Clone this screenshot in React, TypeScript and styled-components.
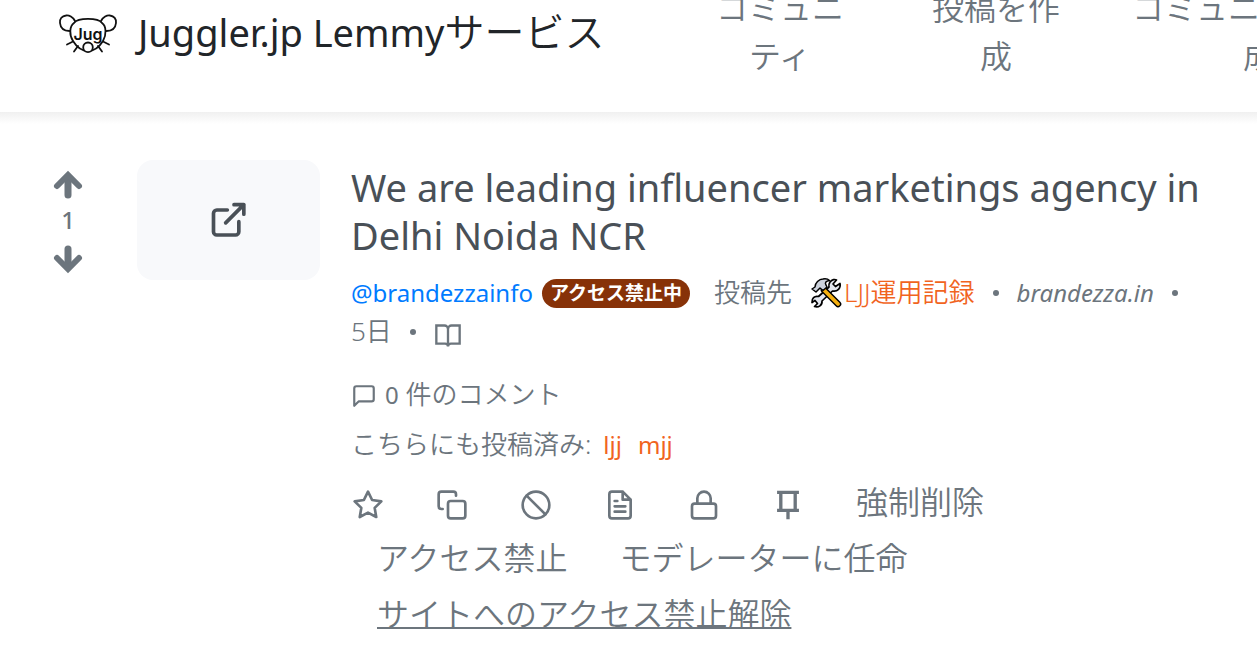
import React from "react";
import styled, { createGlobalStyle, css } from "styled-components";

const muted = "#6c757d";
const orange = "#f1641e";

const GlobalStyle = createGlobalStyle`
  *, *::before, *::after { box-sizing: border-box; }
  body {
    margin: 0;
    background: #fff;
    color: ${muted};
    font-family: "Noto Sans", "Noto Sans CJK JP", sans-serif;
    font-size: 32px;
    line-height: 48px;
    overflow: hidden;
  }
`;

const Header = styled.header`
  display: flex;
  align-items: flex-start;
  padding: 0 0 0 56px;
  height: 112px;
  overflow: hidden;
  white-space: nowrap;
  background: #fff;
`;

const HeaderShadow = styled.div`
  height: 12px;
  background: linear-gradient(#f0f0f0, #fff);
`;

const Brand = styled.a`
  display: flex;
  align-items: center;
  gap: 18px;
  width: 608px;
  flex: none;
  height: 64px;
  color: #212529;
  font-size: 38px;
  text-decoration: none;
`;

const Kana = styled.span`
  font-size: 40px;
  font-weight: 350;
`;

const Nav = styled.nav`
  display: flex;
  gap: 56px;
  margin-top: -16px;
  padding-left: 36px;
`;

const NavLink = styled.a`
  flex: none;
  min-width: 160px;
  color: ${muted};
  font-weight: 350;
  text-align: center;
  text-decoration: none;
`;

const Post = styled.article`
  display: flex;
  align-items: flex-start;
  padding: 36px 48px 24px;
`;

const Votes = styled.div`
  display: flex;
  flex: none;
  flex-direction: column;
  align-items: center;
  width: 40px;
  margin-right: 49px;
  padding-top: 9px;
  font-size: 24px;
  font-weight: 500;
  line-height: 38px;
`;

const Score = styled.span`
  padding-bottom: 4px;
`;

const IconButton = styled.button`
  display: flex;
  padding: 0;
  border: 0;
  background: none;
  color: inherit;
  cursor: pointer;
`;

const ReadButton = styled(IconButton)`
  padding-top: 8px;
`;

const Thumbnail = styled.a`
  display: flex;
  flex: none;
  align-items: center;
  justify-content: center;
  width: 183px;
  height: 120px;
  margin-right: 31px;
  border-radius: 16px;
  background: #f8f9fb;
  color: #495057;
`;

const Body = styled.div`
  flex: 1;
  min-width: 0;
`;

const Title = styled.h1`
  margin: 3px 0 14px;
  font-size: 38px;
  font-weight: 400;
  line-height: 48px;
`;

const TitleLink = styled.a`
  color: #495057;
  text-decoration: none;
`;

const Meta = styled.div`
  display: flex;
  flex-wrap: wrap;
  align-items: center;
  font-size: 26px;
  font-weight: 350;
  line-height: 39px;
`;

const latin = css`
  font-size: 24px;
  font-weight: 400;
`;

const UserLink = styled.a`
  ${latin}
  color: #007bff;
  text-decoration: none;
`;

const Badge = styled.span`
  height: 29px;
  margin: 2px 24px 0 9px;
  padding: 0 8px;
  border-radius: 15px;
  background: #873208;
  color: #fff;
  font-size: 19px;
  font-weight: 700;
  line-height: 28px;
`;

const CommunityLink = styled.a`
  display: flex;
  align-items: center;
  gap: 2px;
  margin-left: 18px;
  color: ${orange};
  text-decoration: none;
`;

const Dot = styled.span`
  width: 6px;
  height: 6px;
  margin: 0 18px;
  border-radius: 50%;
  background: ${muted};
`;

const DomainLink = styled.a`
  ${latin}
  color: ${muted};
  font-style: italic;
  text-decoration: none;
`;

const Comments = styled.a`
  display: flex;
  align-items: center;
  gap: 8px;
  margin-top: 24px;
  color: ${muted};
  font-size: 26px;
  font-weight: 350;
  line-height: 39px;
  text-decoration: none;
`;

const Count = styled.span`
  ${latin}
`;

const CommentIcon = styled.span`
  display: flex;
  padding-top: 3px;
`;

const CrossPosts = styled.div`
  display: flex;
  gap: 16px;
  margin-top: 11px;
  font-size: 26px;
  font-weight: 350;
  line-height: 39px;
`;

const CrossLabel = styled.span`
  margin-right: -4px;
`;

const CrossLink = styled.a`
  ${latin}
  color: ${orange};
  text-decoration: none;
`;

const Actions = styled.div`
  display: flex;
  flex-wrap: wrap;
  align-items: center;
  margin-top: 10px;
`;

const ActionButton = styled.button<{ $first?: boolean; $icon?: boolean; $underlined?: boolean }>`
  display: flex;
  align-items: center;
  height: 56px;
  padding: ${(p) => (p.$icon ? 6 : 0)}px 26px 0 ${(p) => (p.$first ? 1 : 26)}px;
  border: 0;
  background: none;
  color: ${muted};
  font-family: inherit;
  font-size: 32px;
  font-weight: 350;
  line-height: 48px;
  text-decoration: ${(p) => (p.$underlined ? "underline" : "none")};
  text-decoration-thickness: 2px;
  cursor: pointer;
`;

type IconProps = { size?: number; children: React.ReactNode };

const Icon = ({ size = 32, children }: IconProps) => (
  <svg
    width={size}
    height={size}
    viewBox="0 0 24 24"
    fill="none"
    stroke="currentColor"
    strokeWidth="2"
    strokeLinecap="round"
    strokeLinejoin="round"
    aria-hidden="true"
  >
    {children}
  </svg>
);

const Logo = () => (
  <svg width="64" height="48" viewBox="0 0 64 48" fill="none" stroke="#111" strokeWidth="1.8" strokeLinecap="round" aria-hidden="true">
    <path d="M19 13C17 9 13 7 10 7.500C6 8 3.500 11 4 15C4.500 20 8 23 13.500 23" />
    <path d="M45 13C47 9 51 7 54 7.500C58 8 60.500 11 60 15C59.500 20 56 23 50.500 23" />
    <path d="M18 15C22 9.500 42 9.500 46 15C50.500 18 50.500 27 47 33C43 39.500 37.500 43 32 43C26.500 43 21 39.500 17 33C13 27 13.500 18 18 15Z" />
    <circle cx="32" cy="39.300" r="4.800" fill="#fff" />
    <path d="M17 33.500L11 36.500M22 38L18 43.500M47 33.500L53 36.500M42 38L46 43.500" />
    <text x="32" y="32" textAnchor="middle" fill="#111" stroke="none" fontFamily="Inter, sans-serif" fontSize="16" fontWeight="600">Jug</text>
  </svg>
);

const Tools = () => (
  <svg width="32" height="32" viewBox="0 0 32 32" strokeLinejoin="round" strokeLinecap="round" aria-hidden="true">
    <path
      d="M20 5C22 2.500 25 2 26.500 3L23 7L25.500 9.500L30 6.500C31 11 27.500 15 22.500 14L12 24C12.500 28 8.500 31 4.500 29.500L7.500 26.500L5 23.500L2 25.500C1.500 21.500 4.500 18.500 8.500 19.500L19 10C18.500 8 19 6.500 20 5Z"
      fill="#e2e6ee"
      stroke="#000"
      strokeWidth="1.700"
    />
    <path d="M14 13L28 27" stroke="#000" strokeWidth="6.600" />
    <path d="M14 13L28 27" stroke="#f5b010" strokeWidth="3.800" />
    <path
      d="M2 12L5 10C5 6 9 2 13 2C16 1.500 18 2 19.500 3.500C16 4 14.500 5.500 16 8L17 10L13 13.500L10 11L6 15Z"
      fill="#ccd2dc"
      stroke="#000"
      strokeWidth="1.500"
    />
  </svg>
);

const ArrowUp = () => (
  <svg width="32" height="32" viewBox="0 0 32 32" fill="none" stroke="currentColor" strokeWidth="7" aria-hidden="true">
    <path d="M16 8V26" strokeLinecap="round" />
    <path d="M5 17L16 6L27 17" strokeWidth="6" strokeLinecap="round" />
  </svg>
);

const ArrowDown = () => (
  <svg width="32" height="32" viewBox="0 0 32 32" fill="none" stroke="currentColor" strokeWidth="7" aria-hidden="true">
    <path d="M16 6V24" strokeLinecap="round" />
    <path d="M5 15L16 26L27 15" strokeWidth="6" strokeLinecap="round" />
  </svg>
);

export default function App() {
  return (
    <>
      <GlobalStyle />
      <Header>
        <Brand href="#">
          <Logo />
          <span>Juggler.jp Lemmy<Kana>サービス</Kana></span>
        </Brand>
        <Nav>
          <NavLink href="#">コミュニ<br />ティ</NavLink>
          <NavLink href="#">投稿を作<br />成</NavLink>
          <NavLink href="#">コミュニティを作<br />成</NavLink>
        </Nav>
      </Header>
      <HeaderShadow />
      <Post>
        <Votes>
          <IconButton aria-label="Upvote"><ArrowUp /></IconButton>
          <Score>1</Score>
          <IconButton aria-label="Downvote"><ArrowDown /></IconButton>
        </Votes>
        <Thumbnail href="#" aria-label="brandezza.in">
          <Icon size={40}>
            <path d="M11 6H4.700a2 2 0 0 0-2 2v11a2 2 0 0 0 2 2h11.200a2 2 0 0 0 2-2v-6M15 2.800h5.900v5.700M20.900 2.800L10 13.700" strokeWidth="2.200" />
          </Icon>
        </Thumbnail>
        <Body>
          <Title>
            <TitleLink href="#">We are leading influencer marketings agency in Delhi Noida NCR</TitleLink>
          </Title>
          <Meta>
            <UserLink href="#">@brandezzainfo</UserLink>
            <Badge>アクセス禁止中</Badge>
            <span>投稿先</span>
            <CommunityLink href="#"><Tools />LJJ運用記録</CommunityLink>
            <Dot />
            <DomainLink href="#">brandezza.in</DomainLink>
            <Dot />
            <span>5日</span>
            <Dot />
            <ReadButton aria-label="Read">
              <Icon size={28}>
                <path d="M2 3h7a3 3 0 0 1 3 3v15a2.500 2.500 0 0 0-2.500-2.500H2zM22 3h-7a3 3 0 0 0-3 3v15a2.500 2.500 0 0 1 2.500-2.500H22z" strokeLinejoin="miter" />
              </Icon>
            </ReadButton>
          </Meta>
          <Comments href="#">
            <CommentIcon>
              <Icon size={26}>
                <path d="M21 15a2 2 0 0 1-2 2H7l-4 4V5a2 2 0 0 1 2-2h14a2 2 0 0 1 2 2z" />
              </Icon>
            </CommentIcon>
            <span><Count>0</Count> 件のコメント</span>
          </Comments>
          <CrossPosts>
            <CrossLabel>こちらにも投稿済み:</CrossLabel>
            <CrossLink href="#">ljj</CrossLink>
            <CrossLink href="#">mjj</CrossLink>
          </CrossPosts>
          <Actions>
            <ActionButton $icon $first aria-label="Save">
              <Icon><path d="M12 2L15.090 8.260L22 9.270L17 14.140L18.180 21.020L12 17.770L5.820 21.020L7 14.140L2 9.270L8.910 8.260Z" /></Icon>
            </ActionButton>
            <ActionButton $icon aria-label="Cross-post">
              <Icon>
                <path d="M5 15H4a2 2 0 0 1-2-2V4a2 2 0 0 1 2-2h9a2 2 0 0 1 2 2v1" />
                <rect x="9" y="9" width="13" height="13" rx="2" />
              </Icon>
            </ActionButton>
            <ActionButton $icon aria-label="Block">
              <Icon><circle cx="12" cy="12" r="10" /><path d="M4.930 4.930L19.070 19.070" /></Icon>
            </ActionButton>
            <ActionButton $icon aria-label="View source">
              <Icon>
                <path d="M14 2H6a2 2 0 0 0-2 2v16a2 2 0 0 0 2 2h12a2 2 0 0 0 2-2V8zM14 2v6h6M10 9H8M16 13H8M16 17H8" />
              </Icon>
            </ActionButton>
            <ActionButton $icon aria-label="Lock">
              <Icon><rect x="3" y="11" width="18" height="11" rx="2" /><path d="M7 11V7a5 5 0 0 1 10 0v4" /></Icon>
            </ActionButton>
            <ActionButton $icon aria-label="Pin">
              <Icon><path d="M3.800 2.500h16.400M6.600 2.500v13.500M17.400 2.500v13.500M3.800 16h16.400M12 16v6.700" strokeWidth="2.500" strokeLinecap="butt" /></Icon>
            </ActionButton>
            <ActionButton>強制削除</ActionButton>
            <ActionButton>アクセス禁止</ActionButton>
            <ActionButton>モデレーターに任命</ActionButton>
            <ActionButton $underlined>サイトへのアクセス禁止解除</ActionButton>
          </Actions>
        </Body>
      </Post>
    </>
  );
}
